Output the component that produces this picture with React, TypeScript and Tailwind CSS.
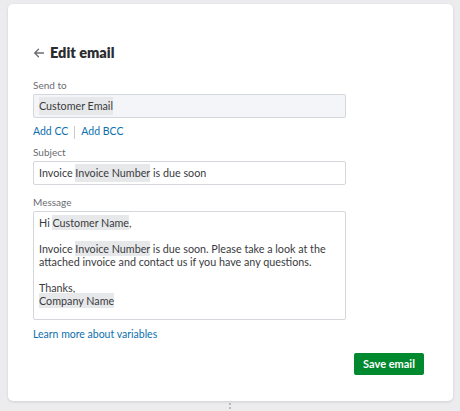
import React from "react";

const V = ({ children }: { children: React.ReactNode }) => (
  <span className="bg-[#e7e8ea] py-[1px]">{children}</span>
);

export default function App() {
  return (
    <div className="w-[460px] h-[411px] bg-[#ececef] pt-[4px] pl-[8px] relative" style={{ fontFamily: "Lato, 'Open Sans', sans-serif" }}>
      <div className="w-[445px] h-[397px] bg-white rounded-[5px] shadow-[0_1px_3px_rgba(0,0,0,0.12)] pl-[25px] pt-[37px] flex flex-col text-[#393a3d]">
        <div className="h-[24px] flex items-center gap-[5px]">
          <svg width="12" height="12" viewBox="0 0 12 12" fill="none" stroke="#6b6c72" strokeWidth="1.3" strokeLinecap="round" strokeLinejoin="round">
            <path d="M10.5 6H1.8M5.5 2.2L1.7 6l3.8 3.8" />
          </svg>
          <span className="text-[14.5px] font-extrabold text-[#2b2c30]">Edit email</span>
        </div>
        <div className="mt-[13px] text-[10px] leading-[14px] text-[#6b6c72]">Send to</div>
        <div className="mt-[2px] w-[313px] h-[24px] bg-[#f4f5f8] border border-[#d4d7dc] rounded-[2px] flex items-center pl-[5px] text-[10.75px]">
          <V>Customer Email</V>
        </div>
        <div className="mt-[7px] h-[14px] flex items-center text-[10.5px] text-[#0d6fae]">
          <span>Add CC</span>
          <span className="mx-[6px] w-px h-[13px] bg-[#c8cace]" />
          <span>Add BCC</span>
        </div>
        <div className="mt-[6px] text-[10px] leading-[14px] text-[#6b6c72]">Subject</div>
        <div className="mt-[2px] w-[313px] h-[24px] bg-white border border-[#d4d7dc] rounded-[2px] flex items-center pl-[5px] text-[10.75px] whitespace-pre">
          <span>Invoice </span><V>Invoice Number</V><span> is due soon</span>
        </div>
        <div className="mt-[10px] text-[10px] leading-[14px] text-[#6b6c72]">Message</div>
        <div className="mt-[2px] w-[313px] h-[109px] bg-white border border-[#d4d7dc] rounded-[2px] pl-[5px] pt-[4px] text-[10.75px] leading-[13px] whitespace-nowrap">
          <div>Hi <V>Customer Name</V>,</div>
          <div className="h-[13px]" />
          <div>Invoice <V>Invoice Number</V> is due soon. Please take a look at the</div>
          <div>attached invoice and contact us if you have any questions.</div>
          <div className="h-[13px]" />
          <div>Thanks,</div>
          <div><V>Company Name</V></div>
        </div>
        <div className="mt-[7px] text-[10.5px] leading-[14px] text-[#0d6fae]">Learn more about variables</div>
        <div className="mt-[12px] w-[391px] flex justify-end">
          <button className="w-[70px] h-[22px] bg-[#00892e] rounded-[2px] text-white text-[11px] font-bold">Save email</button>
        </div>
      </div>
      <div className="absolute left-[229px] top-[403px] flex flex-col gap-[2px]">
        <span className="w-[2px] h-[2px] bg-[#b8babf]" />
        <span className="w-[2px] h-[2px] bg-[#b8babf]" />
      </div>
    </div>
  );
}
